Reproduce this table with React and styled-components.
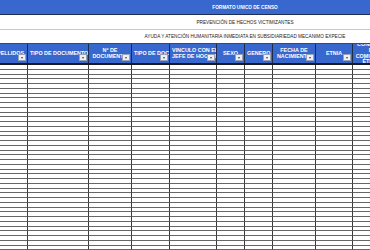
import React from 'react';
import styled, { createGlobalStyle } from 'styled-components';

const blue = '#3867cd';
const cols = '28px 61px 43px 38px 47px 28px 28px 43px 37px 40px';

const headers = [
  { label: 'APELLIDOS', edge: true },
  { label: 'TIPO DE DOCUMENTO' },
  { label: ['Nº DE', 'DOCUMENTO'] },
  { label: 'TIPO DE DOCUMENTO' },
  { label: ['VINCULO CON EL', 'JEFE DE HOGAR'] },
  { label: 'SEXO' },
  { label: 'GENERO' },
  { label: ['FECHA DE', 'NACIMIENTO'] },
  { label: 'ETNIA' },
  { label: ['CONDICIÓN', 'DE', 'COMUNIDAD', 'ÉTNICA'], noFilter: true },
];

const rows = Array.from({ length: 40 }, (_, i) => i);

const GlobalStyle = createGlobalStyle`
  html, body {
    margin: 0;
    padding: 0;
    background: #fff;
    overflow: hidden;
  }
  body {
    font-family: "Liberation Sans", Arial, sans-serif;
  }
`;

const Sheet = styled.div`
  width: 370px;
  height: 250px;
  overflow: hidden;
  background: #fff;
`;

const TitleBar = styled.div`
  height: 14px;
  background: ${blue};
  border-bottom: 1px solid #1d2f55;
  display: grid;
  grid-template-columns: 120px 250px;
  align-items: center;
  color: #fff;
  font-weight: bold;
  font-size: 4.7px;
`;

const Caption = styled.div`
  height: ${p => p.$h}px;
  border-bottom: 1px solid ${p => (p.$last ? 'transparent' : '#c8c8c8')};
  display: grid;
  grid-template-columns: 120px 250px;
  align-items: center;
  color: #222;
  font-size: 4.7px;
`;

const Centered = styled.div`
  grid-column: 2;
  text-align: center;
  white-space: nowrap;
`;

const Grid = styled.div`
  display: grid;
  grid-template-columns: ${cols};
`;

const HeadRow = styled(Grid)`
  height: 19px;
  background: ${blue};
  border-top: 1px solid #2b4a8a;
  border-bottom: 2px solid #1a1a1a;
`;

const HeadCell = styled.div`
  position: relative;
  overflow: hidden;
  border-right: 1px solid #1e2c4c;
  display: flex;
  flex-direction: column;
  align-items: ${p => (p.$edge ? 'flex-end' : 'safe center')};
  justify-content: center;
  padding: ${p => (p.$edge ? '0 3px 0 0' : '0 2px')};
  color: #fff;
  font-weight: bold;
  font-size: 5.4px;
  line-height: 5.6px;
  white-space: nowrap;
  text-align: center;
`;

const Filter = styled.div`
  position: absolute;
  right: 1px;
  bottom: 2px;
  width: 8px;
  height: 7px;
  background: #eeeff2;
  border: 1px solid #9aa3b5;
  box-sizing: border-box;
  display: flex;
  align-items: center;
  justify-content: center;

  &::after {
    content: '';
    border-left: 1.5px solid transparent;
    border-right: 1.5px solid transparent;
    border-top: 2px solid #444;
  }
`;

const BodyRow = styled(Grid)`
  height: 4.75px;
`;

const Cell = styled.div`
  border-right: 1px solid #3a3a3a;
  border-bottom: 1px solid #666;
  box-sizing: border-box;
`;

export default function App() {
  return (
    <Sheet>
      <GlobalStyle />
      <TitleBar>
        <Centered>FORMATO UNICO DE CENSO</Centered>
      </TitleBar>
      <Caption $h={14}>
        <Centered>PREVENCIÓN DE HECHOS VICTIMIZANTES</Centered>
      </Caption>
      <Caption $h={12} $last>
        <Centered>AYUDA Y ATENCIÓN HUMANITARIA INMEDIATA EN SUBSIDIARIEDAD MECANIMO EXPECIE</Centered>
      </Caption>
      <HeadRow>
        {headers.map((h, i) => (
          <HeadCell key={i} $edge={h.edge}>
            {(Array.isArray(h.label) ? h.label : [h.label]).map(line => (
              <span key={line}>{line}</span>
            ))}
            {!h.noFilter && <Filter />}
          </HeadCell>
        ))}
      </HeadRow>
      {rows.map(r => (
        <BodyRow key={r}>
          {headers.map((_, c) => (
            <Cell key={c} />
          ))}
        </BodyRow>
      ))}
    </Sheet>
  );
}
